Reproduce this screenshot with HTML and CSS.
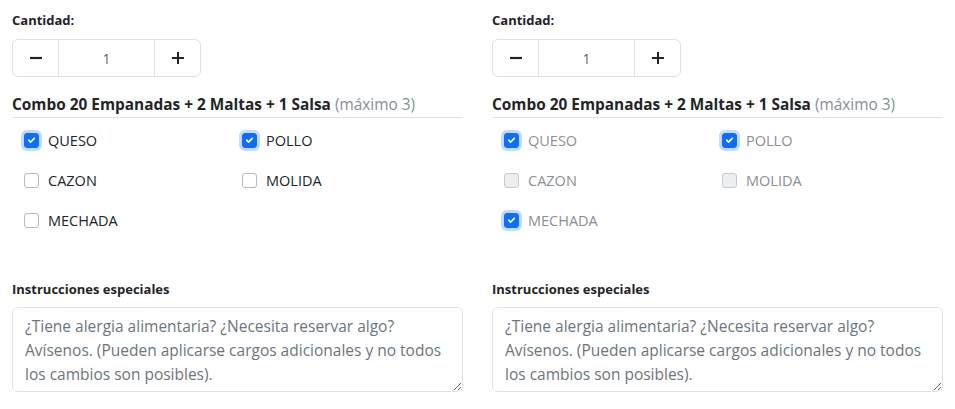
FILE: index.html
```
<!DOCTYPE html>
<html lang="es">
<head>
<meta charset="utf-8">
<link rel="stylesheet" href="styles.css">
</head>
<body>
<div class="page">
  <section class="col">
    <div class="label">Cantidad:</div>
    <div class="stepper">
      <button class="step"><svg width="14" height="14" viewBox="0 0 14 14"><path d="M1 7h12" stroke="#212529" stroke-width="2.2"/></svg></button>
      <div class="qty">1</div>
      <button class="step"><svg width="14" height="14" viewBox="0 0 14 14"><path d="M1 7h12M7 1v12" stroke="#212529" stroke-width="2"/></svg></button>
    </div>
    <h3 class="group">Combo 20 Empanadas + 2 Maltas + 1 Salsa <span class="max">(máximo 3)</span></h3>
    <div class="options">
      <label class="opt"><span class="box checked"><svg viewBox="0 0 14 14" width="14" height="14"><path d="M4 7.2l2 2 4-4" fill="none" stroke="#fff" stroke-width="1.8" stroke-linecap="round" stroke-linejoin="round"/></svg></span>QUESO</label>
      <label class="opt"><span class="box checked"><svg viewBox="0 0 14 14" width="14" height="14"><path d="M4 7.2l2 2 4-4" fill="none" stroke="#fff" stroke-width="1.8" stroke-linecap="round" stroke-linejoin="round"/></svg></span>POLLO</label>
      <label class="opt"><span class="box"></span>CAZON</label>
      <label class="opt"><span class="box"></span>MOLIDA</label>
      <label class="opt"><span class="box"></span>MECHADA</label>
    </div>
    <div class="label notes-label">Instrucciones especiales</div>
    <textarea class="notes" placeholder="¿Tiene alergia alimentaria? ¿Necesita reservar algo? Avísenos. (Pueden aplicarse cargos adicionales y no todos los cambios son posibles)."></textarea>
  </section>
  <section class="col full">
    <div class="label">Cantidad:</div>
    <div class="stepper">
      <button class="step"><svg width="14" height="14" viewBox="0 0 14 14"><path d="M1 7h12" stroke="#212529" stroke-width="2.2"/></svg></button>
      <div class="qty">1</div>
      <button class="step"><svg width="14" height="14" viewBox="0 0 14 14"><path d="M1 7h12M7 1v12" stroke="#212529" stroke-width="2"/></svg></button>
    </div>
    <h3 class="group">Combo 20 Empanadas + 2 Maltas + 1 Salsa <span class="max">(máximo 3)</span></h3>
    <div class="options">
      <label class="opt"><span class="box checked"><svg viewBox="0 0 14 14" width="14" height="14"><path d="M4 7.2l2 2 4-4" fill="none" stroke="#fff" stroke-width="1.8" stroke-linecap="round" stroke-linejoin="round"/></svg></span>QUESO</label>
      <label class="opt"><span class="box checked"><svg viewBox="0 0 14 14" width="14" height="14"><path d="M4 7.2l2 2 4-4" fill="none" stroke="#fff" stroke-width="1.8" stroke-linecap="round" stroke-linejoin="round"/></svg></span>POLLO</label>
      <label class="opt"><span class="box disabled"></span>CAZON</label>
      <label class="opt"><span class="box disabled"></span>MOLIDA</label>
      <label class="opt"><span class="box checked"><svg viewBox="0 0 14 14" width="14" height="14"><path d="M4 7.2l2 2 4-4" fill="none" stroke="#fff" stroke-width="1.8" stroke-linecap="round" stroke-linejoin="round"/></svg></span>MECHADA</label>
    </div>
    <div class="label notes-label">Instrucciones especiales</div>
    <textarea class="notes" placeholder="¿Tiene alergia alimentaria? ¿Necesita reservar algo? Avísenos. (Pueden aplicarse cargos adicionales y no todos los cambios son posibles)."></textarea>
  </section>
</div>
</body>
</html>
```
FILE: styles.css
```
* { box-sizing: border-box; }
body {
  margin: 0;
  background: #fff;
  font-family: "Open Sans", "Lato", sans-serif;
  color: #212529;
}
.page {
  display: grid;
  grid-template-columns: 451px 451px;
  column-gap: 29px;
  padding: 10px 12px 0;
}
.col { display: flex; flex-direction: column; }
.label {
  font-size: 13px;
  font-weight: 700;
  line-height: 20px;
}
.stepper {
  margin-top: 9px;
  display: flex;
  width: 189px;
  height: 38px;
  border: 1px solid #dee2e6;
  border-radius: 6px;
}
.step {
  width: 45px;
  border: 0;
  background: transparent;
  display: flex;
  align-items: center;
  justify-content: center;
  padding: 0;
}
.qty {
  flex: 1;
  border-left: 1px solid #dee2e6;
  border-right: 1px solid #dee2e6;
  display: flex;
  align-items: center;
  justify-content: center;
  font-size: 14px;
  color: #5f666d;
}
.group {
  margin: 17px 0 0;
  font-size: 15.4px;
  font-weight: 700;
  line-height: 22px;
  padding-bottom: 1px;
  border-bottom: 1px solid #dee2e6;
}
.max { font-weight: 400; color: #868e96; }
.options {
  margin-top: 2px;
  display: grid;
  grid-template-columns: 218px 218px;
  grid-auto-rows: 40px;
  padding-left: 12px;
}
.opt {
  display: flex;
  align-items: center;
  gap: 9px;
  font-size: 14.5px;
  color: #212529;
}
.full .opt { color: #8a8f95; }
.box {
  width: 15px;
  height: 15px;
  border: 1px solid #b4bac0;
  border-radius: 3px;
  background: #fff;
  display: flex;
  align-items: center;
  justify-content: center;
  flex: none;
}
.box.checked {
  background: #0d6efd;
  border-color: #0d6efd;
  box-shadow: 0 0 0 3px rgba(13, 110, 253, 0.25);
}
.box.disabled {
  background: #eceef0;
  border-color: #c6cace;
}
.notes-label { margin-top: 39px; }
.notes {
  margin-top: 8px;
  width: 100%;
  height: 85px;
  border: 1px solid #dee2e6;
  border-radius: 6px;
  padding: 6px 12px;
  font-family: inherit;
  font-size: 15.5px;
  line-height: 24px;
  color: #212529;
  resize: vertical;
}
.notes::placeholder { color: #6c757d; opacity: 1; }
```
